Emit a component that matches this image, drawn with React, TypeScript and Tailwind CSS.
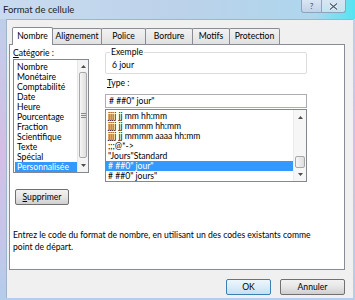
import React from "react";

const categories = [
  "Nombre",
  "Monétaire",
  "Comptabilité",
  "Date",
  "Heure",
  "Pourcentage",
  "Fraction",
  "Scientifique",
  "Texte",
  "Spécial",
  "Personnalisée",
];

const types = [
  "jjjj jj mm hh:mm",
  "jjjj jj mmmm hh:mm",
  "jjjj jj mmmm aaaa hh:mm",
  ";;;@*->",
  '"Jours"Standard',
  '# ##0" jour"',
  '# ##0" jours"',
];

const tabs = [
  { label: "Nombre", w: "w-[41px]" },
  { label: "Alignement", w: "w-[50px]" },
  { label: "Police", w: "w-[45px]" },
  { label: "Bordure", w: "w-[48px]" },
  { label: "Motifs", w: "w-[38px]" },
  { label: "Protection", w: "w-[51px]" },
];

function Arrow({ up }: { up?: boolean }) {
  return (
    <svg width="5" height="3" viewBox="0 0 5 3">
      <path d={up ? "M0 3 L2.5 0 L5 3 Z" : "M0 0 L2.5 3 L5 0 Z"} fill="#4d4d4d" />
    </svg>
  );
}

function Thumb({ className, grip }: { className: string; grip?: boolean }) {
  return (
    <div
      className={`mx-[1px] rounded-[2px] border border-[#a8a8a8] bg-gradient-to-r from-[#f6f6f6] to-[#dedede] flex flex-col items-center justify-center gap-[1px] ${className}`}
    >
      {grip && (
        <>
          <div className="w-[5px] h-[1px] bg-[#8a8a8a]" />
          <div className="w-[5px] h-[1px] bg-[#8a8a8a]" />
          <div className="w-[5px] h-[1px] bg-[#8a8a8a]" />
        </>
      )}
    </div>
  );
}

export default function App() {
  return (
    <div className="w-[355px] h-[300px] overflow-hidden flex flex-col font-['Lato',sans-serif] text-[8.6px] text-black bg-gradient-to-b from-[#b9d1ea] via-[#d6bde6] to-[#b4cdea]">
      {/* title bar */}
      <div className="h-[19px] shrink-0 flex items-start bg-gradient-to-r from-[#c9dbef] via-[#bcd2ea] to-[#a9d8ee] relative">
        <div className="pl-[3px] pt-[5px] text-[9.5px] leading-[10px] text-[#1e1e1e]">
          Format de cellule
        </div>
        <div className="absolute right-0 top-0 w-[40px] h-[19px] bg-gradient-to-r from-transparent to-[#54e4f2]" />
        <div className="ml-auto mr-[9px] flex relative">
          <div className="w-[21px] h-[13px] border border-t-0 border-[#8fa3bd] rounded-bl-[3px] bg-gradient-to-b from-[#d9e5f2] to-[#c1d3e8] flex items-center justify-center text-[8px] leading-none text-[#3a4c66]">
            ?
          </div>
          <div className="w-[24px] h-[13px] border border-t-0 border-l-0 border-[#8fa3bd] rounded-br-[3px] bg-gradient-to-b from-[#d9e5f2] to-[#c1e4f0] flex items-center justify-center">
            <svg width="9" height="7" viewBox="0 0 9 7">
              <path d="M1 0.5 L8 6.5 M8 0.5 L1 6.5" stroke="#ffffff" strokeWidth="2.6" />
              <path d="M1 0.5 L8 6.5 M8 0.5 L1 6.5" stroke="#4a5d78" strokeWidth="1.2" />
            </svg>
          </div>
        </div>
      </div>

      <div className="flex flex-1 pl-[6px] pr-[2px] pb-[2px]">
        {/* client area */}
        <div className="flex-1 flex flex-col bg-[#f0f0f0] border-l border-t border-[#9fb3cc] pl-[2px] pr-[8px] pt-[6px]">
          {/* tabs */}
          <div className="flex items-end h-[18px] pl-[3px] relative z-10">
            {tabs.map((t, i) =>
              i === 0 ? (
                <div
                  key={t.label}
                  className={`${t.w} h-[18px] -mb-[1px] bg-white border border-b-0 border-[#898c95] rounded-t-[2px] flex items-center justify-center leading-none`}
                >
                  {t.label}
                </div>
              ) : (
                <div
                  key={t.label}
                  className={`${t.w} h-[16px] -ml-[1px] border border-b-0 border-[#898c95] rounded-t-[2px] bg-gradient-to-b from-[#f2f2f2] to-[#e1e1e1] flex items-center justify-center leading-none`}
                >
                  {t.label}
                </div>
              )
            )}
          </div>

          {/* panel */}
          <div className="h-[226px] bg-white border border-[#898c95] flex flex-col pl-[3px] pt-[3px]">
            <div className="flex gap-[16px]">
              {/* left column */}
              <div className="w-[76px] flex flex-col">
                <div className="h-[10px] leading-[10px]">
                  <span className="underline">C</span>atégorie :
                </div>
                <div className="mt-[1px] h-[114px] border border-[#828790] flex">
                  <div className="flex-1 pt-[2px] pl-[1px] flex flex-col">
                    {categories.map((c, i) => (
                      <div
                        key={c}
                        className={`h-[10.2px] leading-[10px] pl-[2px] whitespace-nowrap ${
                          i === categories.length - 1 ? "bg-[#3399ff] text-white" : ""
                        }`}
                      >
                        {c}
                      </div>
                    ))}
                  </div>
                  <div className="w-[11px] bg-[#f4f4f4] border-l border-[#e6e6e6] flex flex-col items-stretch">
                    <div className="h-[12px] flex items-center justify-center">
                      <Arrow up />
                    </div>
                    <Thumb className="h-[86px]" grip />
                    <div className="flex-1 flex items-center justify-center">
                      <Arrow />
                    </div>
                  </div>
                </div>
                <div className="mt-[16px] w-[54px] h-[16px] ml-[2px] rounded-[2px] border border-[#707070] bg-gradient-to-b from-[#f2f2f2] via-[#e6e6e6] to-[#cfcfcf] flex items-center justify-center leading-none">
                  <span>
                    <span className="underline">S</span>upprimer
                  </span>
                </div>
              </div>

              {/* right column */}
              <div className="w-[202px] flex flex-col">
                <fieldset className="mt-[-1px] h-[27px] border border-[#dcdcdc] rounded-[2px] pl-[4px]">
                  <legend className="px-[1px] leading-[10px]">Exemple</legend>
                  <div className="pl-[2px] pt-[3px] leading-[10px]">6 jour</div>
                </fieldset>
                <div className="mt-[4px] h-[10px] leading-[10px] pl-[2px]">
                  <span className="underline">T</span>ype :
                </div>
                <div className="mt-[6px] h-[14px] border border-[#abadb3] pl-[3px] leading-[12px]">
                  # ##0&quot; jour&quot;
                </div>
                <div className="mt-[1px] h-[73px] border border-[#828790] flex">
                  <div className="flex-1 pt-[1px] flex flex-col">
                    {types.map((t, i) => (
                      <div
                        key={t}
                        className={`h-[10px] leading-[10px] pl-[2px] whitespace-nowrap ${
                          i === 5 ? "bg-[#3399ff] text-white" : ""
                        }`}
                      >
                        {t}
                      </div>
                    ))}
                  </div>
                  <div className="w-[13px] bg-[#f6f6f6] border-l border-[#ececec] flex flex-col">
                    <div className="h-[14px] flex items-center justify-center">
                      <Arrow up />
                    </div>
                    <div className="flex-1" />
                    <Thumb className="h-[12px]" />
                    <div className="h-[13px] flex items-center justify-center">
                      <Arrow />
                    </div>
                  </div>
                </div>
              </div>
            </div>

            <div className="mt-[24px] leading-[12px]">
              Entrez le code du format de nombre, en utilisant un des codes existants comme
              <br />
              point de départ.
            </div>
          </div>

          {/* buttons */}
          <div className="flex justify-end gap-[9px] mt-[9px]">
            <div className="w-[45px] h-[16px] rounded-[2px] border border-[#3c7fb1] bg-gradient-to-b from-[#edf6fc] via-[#dcecf8] to-[#c4e0f4] flex items-center justify-center leading-none">
              OK
            </div>
            <div className="w-[65px] h-[16px] rounded-[2px] border border-[#707070] bg-gradient-to-b from-[#f2f2f2] via-[#e6e6e6] to-[#cfcfcf] flex items-center justify-center leading-none">
              Annuler
            </div>
          </div>
        </div>
      </div>
    </div>
  );
}
